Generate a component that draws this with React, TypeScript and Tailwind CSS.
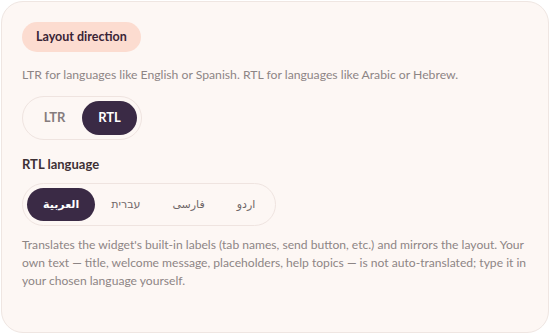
import { useState } from "react"

const font = { fontFamily: "Lato, 'DejaVu Sans', sans-serif" }

export default function App() {
  const [dir, setDir] = useState<"ltr" | "rtl">("rtl")
  const [lang, setLang] = useState("ar")

  const langs = [
    { id: "ar", label: "العربية" },
    { id: "he", label: "עברית" },
    { id: "fa", label: "فارسی" },
    { id: "ur", label: "اردو" },
  ]

  return (
    <div className="w-[550px] h-[335px] bg-white p-px" style={font}>
      <div className="h-[332px] w-[548px] rounded-[22px] border border-[#efe6e2] bg-[#fdf7f4] px-5 pt-5">
        <span className="inline-flex h-[30px] items-center rounded-full bg-[#fcdcd0] px-[14px] text-[12.5px] font-bold text-[#3a2436]">
          Layout direction
        </span>

        <p className="mt-[14px] text-[12.2px] leading-[18px] text-[#8d8585]">
          LTR for languages like English or Spanish. RTL for languages like Arabic or Hebrew.
        </p>

        <div className="mt-3 inline-flex rounded-full border border-[#efe4e0] p-[4px]">
          {(["ltr", "rtl"] as const).map(d => (
            <button
              key={d}
              onClick={() => setDir(d)}
              className={`h-[34px] w-[55px] rounded-full text-[13px] font-bold ${dir === d ? "bg-[#3a2a45] text-white" : "text-[#857c7d]"}`}
            >
              {d.toUpperCase()}
            </button>
          ))}
        </div>

        <p className="mt-[15px] text-[13px] font-bold leading-[18px] text-[#3d3035]">RTL language</p>

        <div className="mt-[10px] inline-flex rounded-full border border-[#efe4e0] p-[4px]">
          {langs.map(l => (
            <button
              key={l.id}
              onClick={() => setLang(l.id)}
              className={`h-[33px] rounded-full px-4 text-[11px] ${lang === l.id ? "bg-[#3a2a45] font-bold text-white" : "text-[#6f6668]"}`}
            >
              {l.label}
            </button>
          ))}
        </div>

        <p className="mt-[10px] text-[12.1px] leading-[18px] text-[#8d8585]">
          Translates the widget's built-in labels (tab names, send button, etc.) and mirrors the layout. Your own text — title, welcome message, placeholders, help topics — is not auto-translated; type it in your chosen language yourself.
        </p>
      </div>
    </div>
  )
}
